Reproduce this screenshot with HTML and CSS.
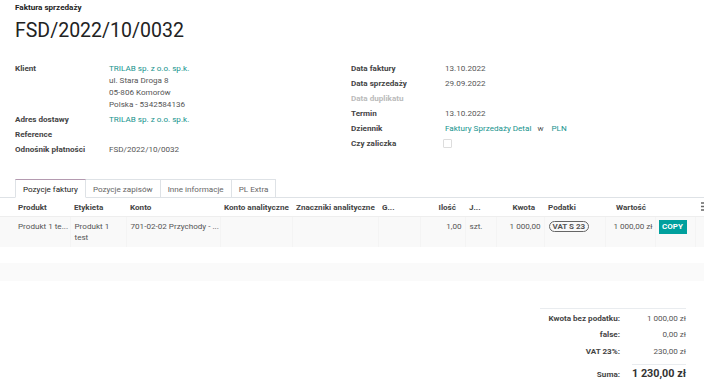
FILE: index.html
```html
<!DOCTYPE html>
<html lang="pl">
<head>
  <meta charset="UTF-8">
  <meta name="viewport" content="width=device-width, initial-scale=1.0">
  <title>FSD/2022/10/0032</title>
  <link rel="stylesheet" href="styles.css">
</head>
<body>
  <div class="sheet">
    <div class="breadcrumb">Faktura sprzedaży</div>
    <h1 class="title">FSD/2022/10/0032</h1>

    <div class="groups">
      <div class="group">
        <div class="label">Klient</div>
        <div class="value">
          <a class="link">TRILAB sp. z o.o. sp.k.</a><br>
          ul. Stara Droga 8<br>
          05-806 Komorów<br>
          Polska - 5342584136
        </div>
        <div class="label">Adres dostawy</div>
        <div class="value"><a class="link">TRILAB sp. z o.o. sp.k.</a></div>
        <div class="label">Reference</div>
        <div class="value"></div>
        <div class="label">Odnośnik płatności</div>
        <div class="value">FSD/2022/10/0032</div>
      </div>

      <div class="group">
        <div class="label">Data faktury</div>
        <div class="value">13.10.2022</div>
        <div class="label">Data sprzedaży</div>
        <div class="value">29.09.2022</div>
        <div class="label muted">Data duplikatu</div>
        <div class="value"></div>
        <div class="label">Termin</div>
        <div class="value">13.10.2022</div>
        <div class="label">Dziennik</div>
        <div class="value">
          <a class="link">Faktury Sprzedaży Detal</a>
          <span class="in">w</span>
          <a class="link">PLN</a>
        </div>
        <div class="label">Czy zaliczka</div>
        <div class="value"><span class="checkbox"></span></div>
      </div>
    </div>

    <ul class="tabs">
      <li class="tab active">Pozycje faktury</li>
      <li class="tab">Pozycje zapisów</li>
      <li class="tab">Inne informacje</li>
      <li class="tab">PL Extra</li>
    </ul>
  </div>

  <table class="lines">
    <colgroup>
      <col style="width:70px">
      <col style="width:56px">
      <col style="width:94px">
      <col style="width:72px">
      <col style="width:86px">
      <col style="width:42px">
      <col style="width:45px">
      <col style="width:31px">
      <col style="width:48px">
      <col style="width:61px">
      <col style="width:50px">
      <col style="width:40px">
      <col style="width:9px">
    </colgroup>
    <thead>
      <tr>
        <th class="first">Produkt</th>
        <th>Etykieta</th>
        <th>Konto</th>
        <th class="num">Konto analityczne</th>
        <th>Znaczniki analityczne</th>
        <th>G...</th>
        <th class="num sort">Ilość</th>
        <th>J...</th>
        <th class="num sort">Kwota</th>
        <th>Podatki</th>
        <th class="num wide">Wartość</th>
        <th></th>
        <th class="opt">
          <svg width="8" height="9" viewBox="0 0 8 9"><path d="M1 1h6M1 4.5h6M1 8h6" stroke="#666" stroke-width="1.4"/></svg>
        </th>
      </tr>
    </thead>
    <tbody>
      <tr class="line">
        <td class="first">Produkt 1 te...</td>
        <td>Produkt 1 test</td>
        <td class="nowrap">701-02-02 Przychody - ...</td>
        <td></td>
        <td></td>
        <td></td>
        <td class="num">1,00</td>
        <td>szt.</td>
        <td class="num">1 000,00</td>
        <td><span class="badge">VAT S 23</span></td>
        <td class="num tight">1 000,00 zł</td>
        <td><button class="copy">COPY</button></td>
        <td></td>
      </tr>
    </tbody>
  </table>
  <div class="spacer"></div>
  <div class="band"></div>

  <div class="totals">
    <div class="totals-grid">
      <div class="t-label">Kwota bez podatku:</div>
      <div class="t-value">1 000,00 zł</div>
      <div class="t-label">false:</div>
      <div class="t-value">0,00 zł</div>
      <div class="t-label">VAT 23%:</div>
      <div class="t-value">230,00 zł</div>
      <div class="t-label sum">Suma:</div>
      <div class="t-value sum">1 230,00 zł</div>
    </div>
  </div>
</body>
</html>
```

FILE: styles.css
```css
* {
  margin: 0;
  padding: 0;
  box-sizing: border-box;
}

body {
  font-family: Roboto, "Liberation Sans", sans-serif;
  font-size: 8.1px;
  color: #555;
  background: #fff;
  width: 704px;
  overflow: hidden;
}

.sheet {
  padding-left: 15px;
}

.breadcrumb {
  margin-top: 1px;
  line-height: 12px;
  font-weight: bold;
  color: #222;
}

.title {
  margin-top: 6px;
  font-size: 19.5px;
  line-height: 24px;
  font-weight: normal;
  color: #222;
}

.groups {
  display: grid;
  grid-template-columns: 336px 1fr;
  margin-top: 19px;
}

.group {
  display: grid;
  grid-template-columns: 94px 1fr;
  row-gap: 3px;
  line-height: 12px;
  align-content: start;
}

.label {
  font-weight: bold;
  color: #444;
}

.label.muted {
  color: #bbb;
}

.value {
  color: #555;
}

.link {
  color: #15938d;
}

.in {
  margin: 0 6px 0 4px;
}

.checkbox {
  display: inline-block;
  width: 9px;
  height: 9px;
  margin-left: -2px;
  margin-top: 2px;
  border: 1px solid #ddd;
  border-radius: 1px;
  vertical-align: top;
}

.tabs {
  display: flex;
  list-style: none;
  margin-top: 24px;
  margin-left: -15px;
  padding-left: 15px;
  border-bottom: 1px solid #dee2e6;
}

.tab {
  height: 19px;
  line-height: 18px;
  padding: 0 7px;
  margin-bottom: -1px;
  border: 1px solid #dee2e6;
  border-left: none;
  color: #666;
}

.tab:first-child {
  border-left: 1px solid #dee2e6;
}

.tab.active {
  color: #222;
  background: #fff;
  border-top-color: #b49ab0;
  border-bottom-color: #fff;
}

.lines {
  width: 704px;
  table-layout: fixed;
  border-collapse: collapse;
}

.lines th {
  height: 18px;
  padding: 0 4px;
  text-align: left;
  font-weight: bold;
  color: #444;
  white-space: nowrap;
  overflow: hidden;
  border-bottom: 1px solid #eee;
  box-shadow: 0 1px 2px rgba(0, 0, 0, 0.04);
}

.lines td {
  height: 29px;
  padding: 4px 4px;
  line-height: 11px;
  vertical-align: top;
  color: #555;
  background: #f9f9f9;
  border-left: 1px solid #f4f4f4;
}

.lines .first {
  padding-left: 18px;
  border-left: none;
}

.lines td.first,
.lines td.nowrap {
  white-space: nowrap;
  overflow: hidden;
}

.lines .num {
  text-align: right;
}

.lines th.sort {
  padding-right: 9px;
}

.lines th.wide {
  padding-right: 9px;
}

.lines td.num {
  padding-right: 3px;
}

.lines td.tight {
  padding-right: 2px;
  white-space: nowrap;
}

.lines th.opt {
  padding: 0 0 0 5px;
  overflow: hidden;
}

.lines th.opt svg {
  display: block;
}

.badge {
  display: inline-block;
  padding: 0 3px;
  height: 11px;
  line-height: 9px;
  border: 1px solid #666;
  border-radius: 6px;
  font-weight: bold;
  font-size: 8px;
  color: #555;
  white-space: nowrap;
}

.copy {
  display: block;
  margin: -1px 0 0 -1px;
  width: 28px;
  height: 14px;
  border: none;
  background: #00a09d;
  color: #fff;
  font-family: Roboto, "Liberation Sans", sans-serif;
  font-weight: bold;
  font-size: 8px;
}

.spacer {
  height: 16px;
}

.band {
  height: 18px;
  background: #fafafa;
}

.totals {
  display: flex;
  justify-content: flex-end;
  padding: 27px 18px 0 0;
}

.totals-grid {
  display: grid;
  grid-template-columns: 80px 66px;
  border-top: 1px solid #e9ecef;
  padding-top: 3px;
  row-gap: 4px;
  line-height: 12.5px;
  align-items: end;
}

.t-label {
  text-align: right;
  font-weight: bold;
  color: #444;
}

.t-value {
  text-align: right;
  color: #555;
}

.t-label.sum {
  padding-bottom: 1px;
}

.t-value.sum {
  justify-self: end;
  margin-top: 3px;
  padding-top: 2px;
  white-space: nowrap;
  border-top: 1px solid #e9ecef;
  font-size: 10.8px;
  line-height: 14px;
  font-weight: bold;
  color: #333;
}
```
